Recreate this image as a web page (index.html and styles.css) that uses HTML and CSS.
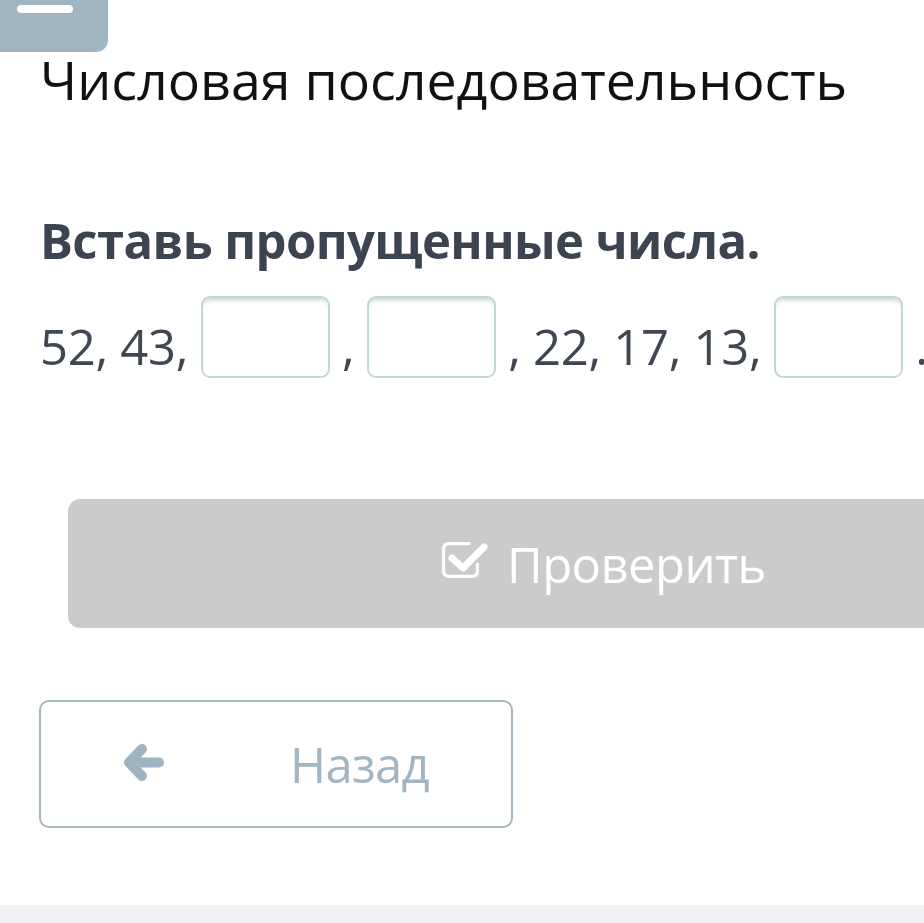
FILE: index.html
```html
<!DOCTYPE html>
<html lang="ru">
<head>
    <meta charset="UTF-8">
    <meta name="viewport" content="width=device-width, initial-scale=1.0">
    <title>Числовая последовательность</title>
    <link rel="stylesheet" href="styles.css">
</head>
<body>
    <div class="page">
        <div class="menu-tab">
            <div class="menu-bar"></div>
        </div>

        <div class="content">
            <h1 class="task-title">Числовая последовательность</h1>

            <div class="task">
                <div class="task-question">Вставь пропущенные числа.</div>
                <div class="sequence">52, 43, <span class="gap"></span> , <span class="gap"></span> , 22, 17, 13, <span class="gap"></span> .</div>
            </div>

            <div class="check-row">
                <button class="btn-check">
                    <svg class="check-icon" width="47" height="36" viewBox="0 0 47 36">
                        <path d="M27 1.6 H7 Q1.6 1.6 1.6 7 V29 Q1.6 34.4 7 34.4 H30 Q35.4 34.4 35.4 29 V22" fill="none" stroke="#fff" stroke-width="3.2" stroke-linecap="round"/>
                        <path d="M10 16 L21 26 L42 5" fill="none" stroke="#fff" stroke-width="7" stroke-linecap="round" stroke-linejoin="round"/>
                    </svg>
                    <span>Проверить</span>
                </button>
            </div>

            <div class="nav-row">
                <button class="btn-back">
                    <svg class="back-icon" width="42" height="37" viewBox="0 0 42 37">
                        <path d="M19 5 L6 18.5 L19 32" fill="none" stroke="#9fb3c1" stroke-width="10" stroke-linecap="round" stroke-linejoin="round"/>
                        <path d="M8 18.5 H36" fill="none" stroke="#9fb3c1" stroke-width="10" stroke-linecap="round"/>
                    </svg>
                    <span>Назад</span>
                </button>
            </div>
        </div>

        <div class="footer-bar"></div>
    </div>
</body>
</html>
```

FILE: styles.css
```css
* {
    margin: 0;
    padding: 0;
    box-sizing: border-box;
}

html, body {
    overflow: hidden;
}

body {
    font-family: 'Open Sans', 'Noto Sans', sans-serif;
    background: #fff;
    color: #000;
    width: 924px;
    height: 923px;
}

.page {
    position: relative;
    width: 1208px;
    height: 923px;
}

.menu-tab {
    width: 108px;
    height: 52px;
    background: #a1b5c2;
    border-bottom-right-radius: 12px;
    padding: 5px 0 0 17px;
}

.menu-bar {
    width: 56px;
    height: 8px;
    background: #fff;
    border-radius: 4px;
}

.content {
    padding: 0 40px;
}

.task-title {
    font-size: 53.7px;
    font-weight: 400;
    line-height: 54px;
    margin-top: 1px;
    color: #111;
}

.task {
    margin-top: 107px;
    color: #3c4451;
}

.task-question {
    font-size: 49px;
    font-weight: 700;
    line-height: 52px;
    letter-spacing: -0.6px;
}

.sequence {
    font-size: 49px;
    line-height: 52px;
    letter-spacing: -0.3px;
    margin-top: 30px;
    white-space: nowrap;
    color: #3f4753;
}

.gap {
    display: inline-block;
    width: 129px;
    height: 82px;
    border: 2px solid #c4d7d7;
    border-radius: 9px;
    box-shadow: inset 0 5px 4px -3px #c9d4d4;
    vertical-align: -13px;
}

.check-row {
    margin-top: 121px;
    padding: 0 28px;
}

.btn-check {
    width: 100%;
    height: 129px;
    border: none;
    border-radius: 12px;
    background: #cbcbcb;
    color: #fff;
    font-family: inherit;
    font-size: 49px;
    letter-spacing: -0.55px;
    display: flex;
    align-items: center;
    justify-content: center;
    gap: 18px;
}

.check-icon {
    margin-top: -8px;
}

.nav-row {
    margin-top: 72px;
}

.btn-back {
    width: 474px;
    height: 128px;
    background: #fff;
    border: 2px solid #a8b8c1;
    border-radius: 10px;
    color: #a2b5c2;
    font-family: inherit;
    font-size: 49px;
    letter-spacing: -0.7px;
    display: flex;
    align-items: center;
    justify-content: center;
    gap: 125px;
    margin-left: -1px;
}

.back-icon {
    margin-top: -3px;
}

.footer-bar {
    position: absolute;
    left: 0;
    right: 0;
    bottom: 0;
    height: 18px;
    background: #eef0f3;
}
```
